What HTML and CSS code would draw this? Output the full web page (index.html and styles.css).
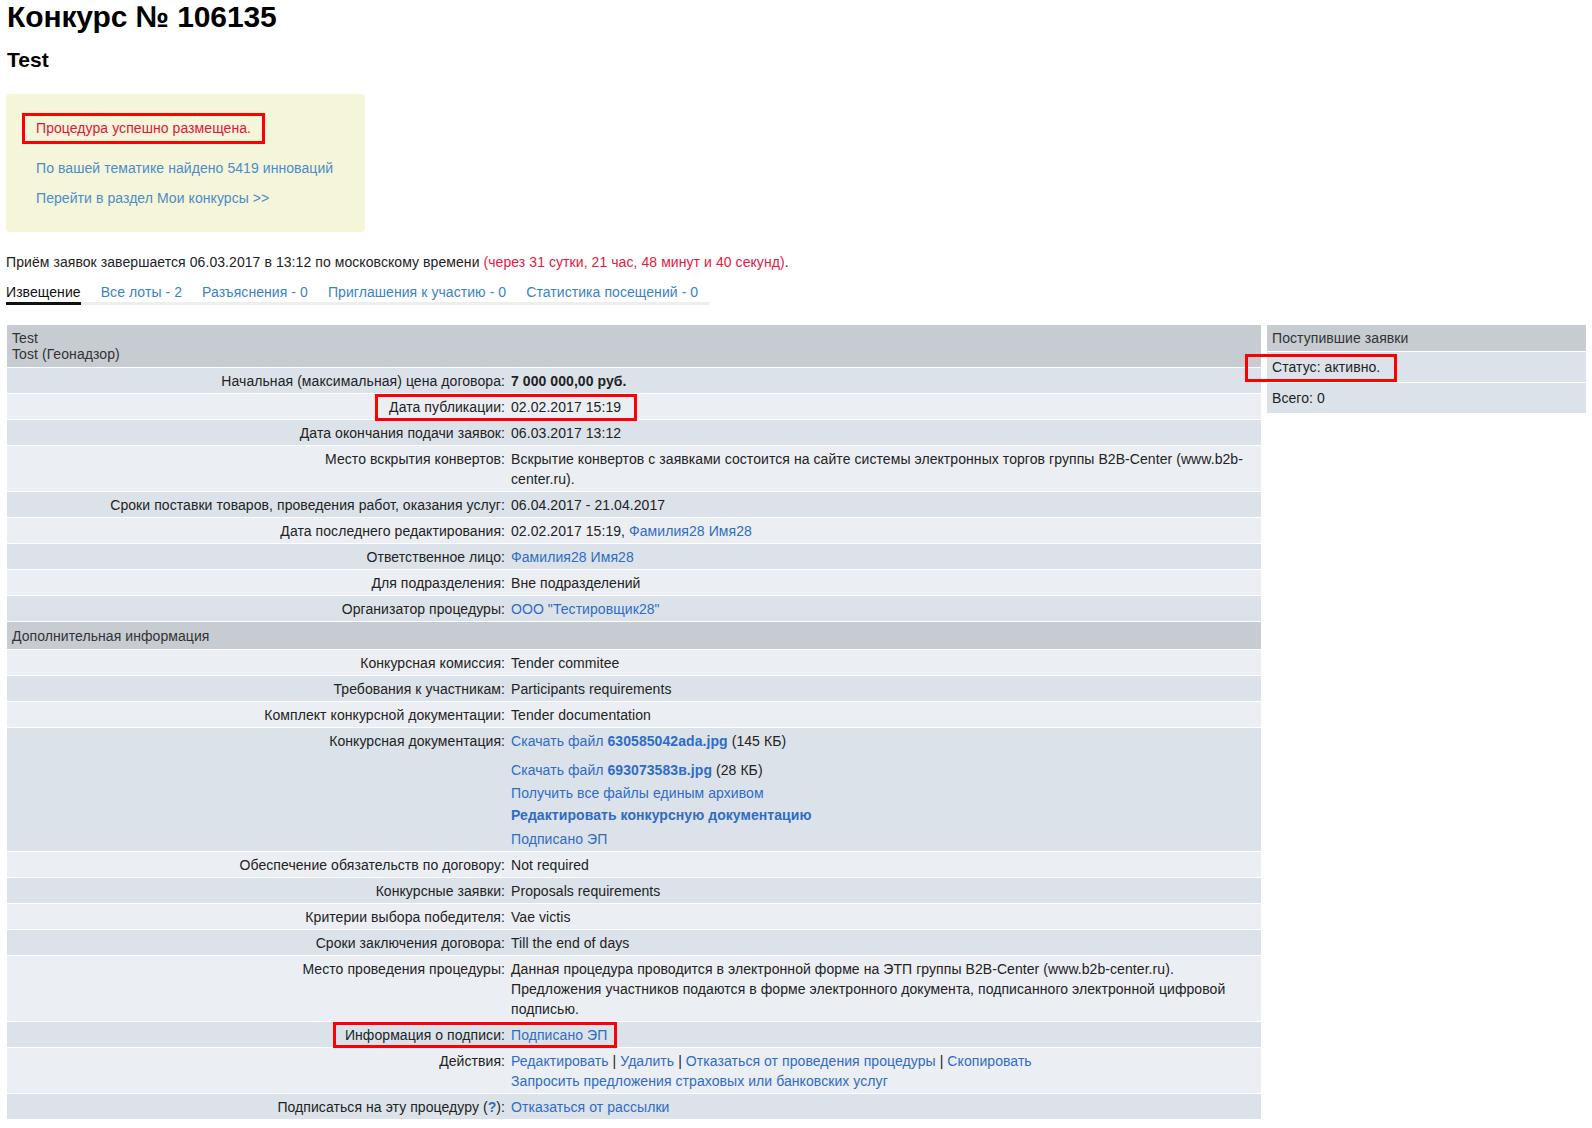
FILE: index.html
```html
<!DOCTYPE html>
<html lang="ru">
<head>
<meta charset="utf-8">
<title>Конкурс № 106135</title>
<link rel="stylesheet" href="styles.css">
</head>
<body>
<h1 class="title">Конкурс № 106135</h1>
<h2 class="subtitle">Test</h2>

<div class="notice">
  <div class="notice-ok">Процедура успешно размещена.</div>
  <p class="notice-link notice-link-first"><a href="#">По вашей тематике найдено 5419 инноваций</a></p>
  <p class="notice-link"><a href="#">Перейти в раздел Мои конкурсы &gt;&gt;</a></p>
</div>

<p class="deadline">Приём заявок завершается 06.03.2017 в 13:12 по московскому времени <span class="countdown">(через 31 сутки, 21 час, 48 минут и 40 секунд)</span>.</p>

<nav class="tabs">
  <span class="tab active">Извещение</span>
  <a class="tab" href="#">Все лоты - 2</a>
  <a class="tab" href="#">Разъяснения - 0</a>
  <a class="tab" href="#">Приглашения к участию - 0</a>
  <a class="tab" href="#">Статистика посещений - 0</a>
</nav>

<div class="layout">
  <div class="info">
    <div class="head head-main">Test<br>Tost (Геонадзор)</div>
    <div class="row dark"><div class="lbl">Начальная (максимальная) цена договора:</div><div class="val"><b>7 000 000,00 руб.</b></div></div>
    <div class="row light mark-row"><div class="lbl">Дата публикации:</div><div class="val">02.02.2017 15:19</div><span class="mark mark-pub"></span></div>
    <div class="row dark"><div class="lbl">Дата окончания подачи заявок:</div><div class="val">06.03.2017 13:12</div></div>
    <div class="row light"><div class="lbl">Место вскрытия конвертов:</div><div class="val">Вскрытие конвертов с заявками состоится на сайте системы электронных торгов группы B2B-Center (www.b2b-center.ru).</div></div>
    <div class="row dark"><div class="lbl">Сроки поставки товаров, проведения работ, оказания услуг:</div><div class="val">06.04.2017 - 21.04.2017</div></div>
    <div class="row light"><div class="lbl">Дата последнего редактирования:</div><div class="val">02.02.2017 15:19, <a href="#">Фамилия28 Имя28</a></div></div>
    <div class="row dark"><div class="lbl">Ответственное лицо:</div><div class="val"><a href="#">Фамилия28 Имя28</a></div></div>
    <div class="row light"><div class="lbl">Для подразделения:</div><div class="val">Вне подразделений</div></div>
    <div class="row dark"><div class="lbl">Организатор процедуры:</div><div class="val"><a href="#">ООО "Тестировщик28"</a></div></div>
    <div class="head head-sub">Дополнительная информация</div>
    <div class="row light"><div class="lbl">Конкурсная комиссия:</div><div class="val">Tender commitee</div></div>
    <div class="row dark"><div class="lbl">Требования к участникам:</div><div class="val">Participants requirements</div></div>
    <div class="row light"><div class="lbl">Комплект конкурсной документации:</div><div class="val">Tender documentation</div></div>
    <div class="row dark"><div class="lbl">Конкурсная документация:</div>
      <div class="val docs">
        <div class="file file-first"><a href="#">Скачать файл <b>630585042ada.jpg</b></a> (145 КБ)</div>
        <div class="file file-second"><a href="#">Скачать файл <b>693073583в.jpg</b></a> (28 КБ)</div>
        <div class="doc-archive"><a href="#">Получить все файлы единым архивом</a></div>
        <div class="doc-edit"><a href="#"><b>Редактировать конкурсную документацию</b></a></div>
        <div><a href="#">Подписано ЭП</a></div>
      </div>
    </div>
    <div class="row light"><div class="lbl">Обеспечение обязательств по договору:</div><div class="val">Not required</div></div>
    <div class="row dark"><div class="lbl">Конкурсные заявки:</div><div class="val">Proposals requirements</div></div>
    <div class="row light"><div class="lbl">Критерии выбора победителя:</div><div class="val">Vae victis</div></div>
    <div class="row dark"><div class="lbl">Сроки заключения договора:</div><div class="val">Till the end of days</div></div>
    <div class="row light"><div class="lbl">Место проведения процедуры:</div><div class="val">Данная процедура проводится в электронной форме на ЭТП группы B2B-Center (www.b2b-center.ru). Предложения участников подаются в форме электронного документа, подписанного электронной цифровой подписью.</div></div>
    <div class="row dark mark-row"><div class="lbl">Информация о подписи:</div><div class="val"><a href="#">Подписано ЭП</a></div><span class="mark mark-sign"></span></div>
    <div class="row light"><div class="lbl">Действия:</div><div class="val"><a href="#">Редактировать</a> | <a href="#">Удалить</a> | <a href="#">Отказаться от проведения процедуры</a> | <a href="#">Скопировать</a><br><a href="#">Запросить предложения страховых или банковских услуг</a></div></div>
    <div class="row dark"><div class="lbl">Подписаться на эту процедуру (<a class="help" href="#">?</a>):</div><div class="val"><a href="#">Отказаться от рассылки</a></div></div>
  </div>

  <aside class="bids">
    <div class="head head-side">Поступившие заявки</div>
    <div class="side-row mark-row">Статус: активно.<span class="mark mark-status"></span></div>
    <div class="side-row">Всего: 0</div>
  </aside>
</div>
</body>
</html>
```
FILE: styles.css
```css
html, body {
  margin: 0;
  padding: 0;
  background: #fff;
}

body {
  padding: 0 6px;
  font-family: "Liberation Sans", Arial, sans-serif;
  font-size: 14px;
  letter-spacing: 0.07px;
  color: #222;
}

a {
  color: #2f6cc4;
  text-decoration: none;
}

.title {
  margin: 0 0 0 1px;
  font-size: 30px;
  line-height: 34px;
  font-weight: bold;
  letter-spacing: -0.1px;
  color: #000;
}

.subtitle {
  margin: 13px 0 0 1px;
  font-size: 21px;
  line-height: 26px;
  font-weight: bold;
  letter-spacing: 0;
  color: #000;
}

.notice {
  width: 327px;
  margin-top: 21px;
  padding: 19px 16px 24px 16px;
  background: #f5f5da;
  border-radius: 4px;
}

.notice-ok {
  display: inline-block;
  border: 3px solid #ff0000;
  padding: 2px 11px;
  line-height: 21px;
  color: #e0163c;
}

.notice-link {
  margin: 10px 0 0 14px;
  line-height: 20px;
}

.notice-link-first {
  margin-top: 14px;
}

.notice-link a {
  color: #4b8ccb;
}

.deadline {
  margin: 20px 0 0 0;
  line-height: 20px;
  color: #222;
}

.countdown {
  color: #e8173f;
}

.tabs {
  display: inline-flex;
  gap: 20px;
  margin-top: 11px;
  border-bottom: 3px solid #eeeeea;
  padding-right: 11px;
}

.tab {
  line-height: 18px;
  padding-bottom: 1px;
  margin-bottom: -3px;
  border-bottom: 3px solid transparent;
  color: #3a82c6;
}

.tab.active {
  color: #111;
  border-bottom-color: #111;
}

.layout {
  display: flex;
  gap: 6px;
  margin: 20px 0 0 1px;
  align-items: flex-start;
}

.info {
  width: 1254px;
  flex: none;
}

.bids {
  flex: 1;
}

.head {
  background: #c7cbd2;
  color: #333;
}

.head-main {
  padding: 5px 5px 5px;
  line-height: 16px;
}

.head-sub {
  padding: 4px 5px 3px;
  line-height: 20px;
  border-top: 1px solid #fff;
}

.head-side {
  padding: 3px 5px;
  line-height: 20px;
}

.row {
  display: grid;
  grid-template-columns: 501px 1fr;
  border-top: 1px solid #fff;
  line-height: 20px;
}

.row.dark {
  background: #dce2e9;
}

.row.light {
  background: #ebeef2;
}

.lbl {
  padding: 3px 3px 2px 5px;
  text-align: right;
  color: #222;
}

.val {
  padding: 3px 12px 2px 3px;
  color: #222;
}

.help {
  font-weight: bold;
}

.file-first {
  margin-bottom: 9px;
}

.file-second {
  margin-bottom: 3px;
}

.doc-archive {
  margin-bottom: 2px;
}

.doc-edit {
  margin-bottom: 4px;
}

.side-row {
  background: #dce2e9;
  border-top: 1px solid #fff;
  padding: 5px 5px;
  line-height: 20px;
  color: #222;
}

.mark-row {
  position: relative;
}

.mark {
  position: absolute;
  border: 3px solid #ff0000;
  box-sizing: border-box;
  pointer-events: none;
}

.mark-pub {
  left: 368px;
  top: 0;
  width: 262px;
  height: 27px;
}

.mark-sign {
  left: 326px;
  top: 0;
  width: 284px;
  height: 26px;
}

.mark-status {
  left: -22px;
  top: 2px;
  width: 152px;
  height: 28px;
}
```
